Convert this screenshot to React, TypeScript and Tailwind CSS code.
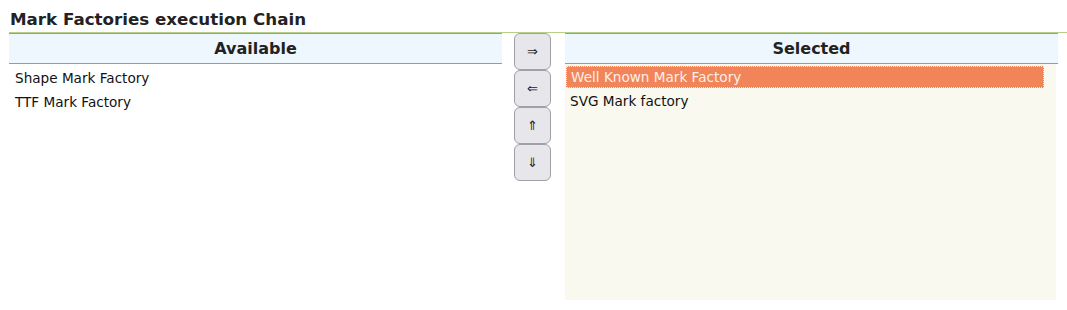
const font = "font-['DejaVu_Sans',sans-serif]";

function Header({ label }: { label: string }) {
  return (
    <div className="flex h-[31px] items-center justify-center border-y border-[#7f9fc8] bg-[#eef6fe] text-[16px] font-bold text-[#222]">
      {label}
    </div>
  );
}

function MoveButton({ glyph }: { glyph: string }) {
  return (
    <button className="flex h-[37px] w-[37px] items-center justify-center rounded-[6px] border border-[#a0a0a8] bg-[#e7e6eb] text-[13px] text-[#222]">
      {glyph}
    </button>
  );
}

export default function App() {
  const available = ["Shape Mark Factory", "TTF Mark Factory"];
  const selected = ["Well Known Mark Factory", "SVG Mark factory"];
  return (
    <div className={`${font} h-[310px] w-[1067px] bg-white pl-[9px] text-[13.6px] text-[#111]`}>
      <div className="pt-[9px] pb-[3px] pl-px text-[16.7px] leading-[20px] font-bold text-[#222]">Mark Factories execution Chain</div>
      <div className="flex border-t border-[#b6d08c]">
        <div className="w-[493px]">
          <Header label="Available" />
          <div className="pt-[2px]">
            {available.map((a) => (
              <div key={a} className="h-[24px] pl-[6px] leading-[24px]">{a}</div>
            ))}
          </div>
        </div>
        <div className="ml-[12px] flex w-[37px] flex-col">
          <MoveButton glyph="⇒" />
          <MoveButton glyph="⇐" />
          <MoveButton glyph="⇑" />
          <MoveButton glyph="⇓" />
        </div>
        <div className="ml-[14px] w-[493px]">
          <Header label="Selected" />
          <div className="mr-[2px] h-[236px] bg-[#f9f9f0] pt-[2px]">
            {selected.map((s, i) => (
              <div
                key={s}
                className={
                  i === 0
                    ? "mr-[12px] ml-px h-[22px] border border-dotted border-[#fde3d6] bg-[#f2845a] pl-[4px] leading-[20px] text-[#fdf0ea]"
                    : "h-[24px] pl-[5px] leading-[26px]"
                }
              >
                {s}
              </div>
            ))}
          </div>
        </div>
      </div>
    </div>
  );
}
